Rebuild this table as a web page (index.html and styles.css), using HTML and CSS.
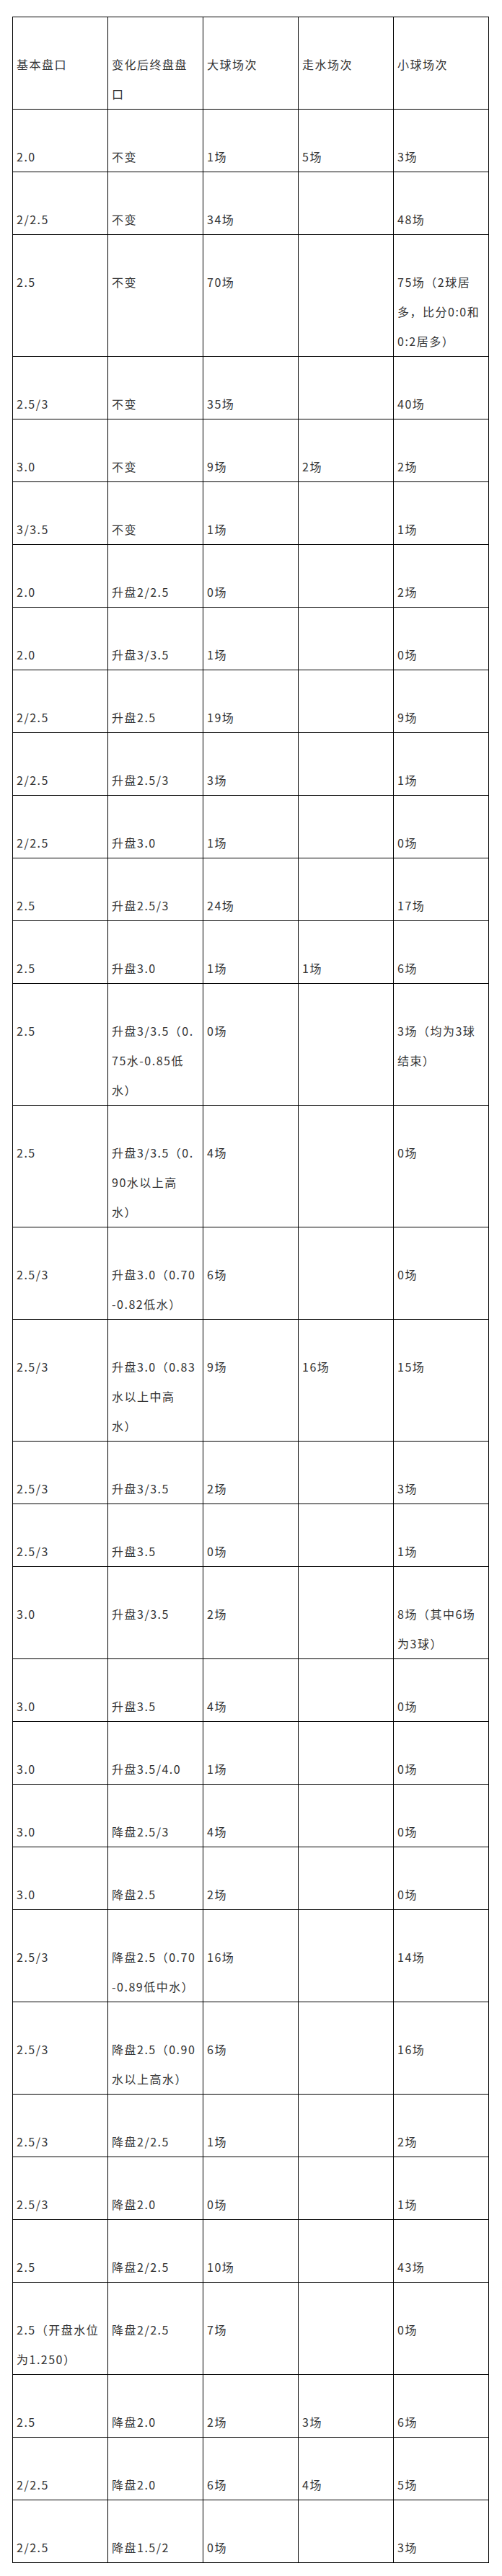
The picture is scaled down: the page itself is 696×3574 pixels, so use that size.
FILE: index.html
```html
<!DOCTYPE html>
<html lang="zh-CN">
<head>
<meta charset="utf-8">
<title>盘口变化统计</title>
<link rel="stylesheet" href="styles.css">
</head>
<body>
<div class="page">
<table class="stats">
<tbody>
<tr><td>基本盘口</td><td>变化后终盘盘<br>口</td><td>大球场次</td><td>走水场次</td><td>小球场次</td></tr>
<tr><td>2.0</td><td>不变</td><td>1场</td><td>5场</td><td>3场</td></tr>
<tr><td>2/2.5</td><td>不变</td><td>34场</td><td></td><td>48场</td></tr>
<tr><td>2.5</td><td>不变</td><td>70场</td><td></td><td>75场（2球居<br>多，比分0:0和<br>0:2居多）</td></tr>
<tr><td>2.5/3</td><td>不变</td><td>35场</td><td></td><td>40场</td></tr>
<tr><td>3.0</td><td>不变</td><td>9场</td><td>2场</td><td>2场</td></tr>
<tr><td>3/3.5</td><td>不变</td><td>1场</td><td></td><td>1场</td></tr>
<tr><td>2.0</td><td>升盘2/2.5</td><td>0场</td><td></td><td>2场</td></tr>
<tr><td>2.0</td><td>升盘3/3.5</td><td>1场</td><td></td><td>0场</td></tr>
<tr><td>2/2.5</td><td>升盘2.5</td><td>19场</td><td></td><td>9场</td></tr>
<tr><td>2/2.5</td><td>升盘2.5/3</td><td>3场</td><td></td><td>1场</td></tr>
<tr><td>2/2.5</td><td>升盘3.0</td><td>1场</td><td></td><td>0场</td></tr>
<tr><td>2.5</td><td>升盘2.5/3</td><td>24场</td><td></td><td>17场</td></tr>
<tr><td>2.5</td><td>升盘3.0</td><td>1场</td><td>1场</td><td>6场</td></tr>
<tr><td>2.5</td><td>升盘3/3.5（0.<br>75水-0.85低<br>水）</td><td>0场</td><td></td><td>3场（均为3球<br>结束）</td></tr>
<tr><td>2.5</td><td>升盘3/3.5（0.<br>90水以上高<br>水）</td><td>4场</td><td></td><td>0场</td></tr>
<tr><td>2.5/3</td><td>升盘3.0（0.70<br>-0.82低水）</td><td>6场</td><td></td><td>0场</td></tr>
<tr><td>2.5/3</td><td>升盘3.0（0.83<br>水以上中高<br>水）</td><td>9场</td><td>16场</td><td>15场</td></tr>
<tr><td>2.5/3</td><td>升盘3/3.5</td><td>2场</td><td></td><td>3场</td></tr>
<tr><td>2.5/3</td><td>升盘3.5</td><td>0场</td><td></td><td>1场</td></tr>
<tr><td>3.0</td><td>升盘3/3.5</td><td>2场</td><td></td><td>8场（其中6场<br>为3球）</td></tr>
<tr><td>3.0</td><td>升盘3.5</td><td>4场</td><td></td><td>0场</td></tr>
<tr><td>3.0</td><td>升盘3.5/4.0</td><td>1场</td><td></td><td>0场</td></tr>
<tr><td>3.0</td><td>降盘2.5/3</td><td>4场</td><td></td><td>0场</td></tr>
<tr><td>3.0</td><td>降盘2.5</td><td>2场</td><td></td><td>0场</td></tr>
<tr><td>2.5/3</td><td>降盘2.5（0.70<br>-0.89低中水）</td><td>16场</td><td></td><td>14场</td></tr>
<tr><td>2.5/3</td><td>降盘2.5（0.90<br>水以上高水）</td><td>6场</td><td></td><td>16场</td></tr>
<tr><td>2.5/3</td><td>降盘2/2.5</td><td>1场</td><td></td><td>2场</td></tr>
<tr><td>2.5/3</td><td>降盘2.0</td><td>0场</td><td></td><td>1场</td></tr>
<tr><td>2.5</td><td>降盘2/2.5</td><td>10场</td><td></td><td>43场</td></tr>
<tr><td>2.5（开盘水位<br>为1.250）</td><td>降盘2/2.5</td><td>7场</td><td></td><td>0场</td></tr>
<tr><td>2.5</td><td>降盘2.0</td><td>2场</td><td>3场</td><td>6场</td></tr>
<tr><td>2/2.5</td><td>降盘2.0</td><td>6场</td><td>4场</td><td>5场</td></tr>
<tr><td>2/2.5</td><td>降盘1.5/2</td><td>0场</td><td></td><td>3场</td></tr>
</tbody>
</table>
</div>
</body>
</html>
```
FILE: styles.css
```css
html, body {
  margin: 0;
  padding: 0;
  background: #ffffff;
}

.page {
  padding: 23px 18px 18px 17px;
}

.stats {
  border-collapse: collapse;
  table-layout: fixed;
  width: 661px;
  font-family: "Noto Sans CJK SC", "Microsoft YaHei", sans-serif;
  font-size: 16px;
  letter-spacing: 1.5px;
  color: #333333;
}

.stats td {
  width: 20%;
  border: 1px solid #000000;
  padding: 45px 5px 0 5px;
  line-height: 41px;
  vertical-align: top;
  white-space: nowrap;
  overflow: hidden;
}
```
